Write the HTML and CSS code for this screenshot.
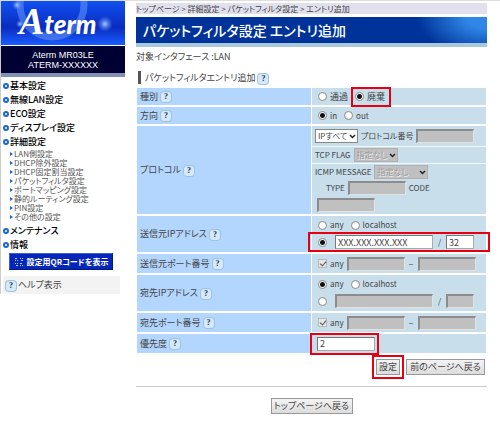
FILE: index.html
```html
<!DOCTYPE html>
<html lang="ja">
<head>
  <meta charset="UTF-8">
  <meta name="viewport" content="width=device-width, initial-scale=1.0">
  <title>パケットフィルタ設定 エントリ追加</title>
  <link rel="stylesheet" href="styles.css">
</head>
<body>

  <div class="sidebar">
    <div class="logo">
      <svg viewBox="0 0 124 44" preserveAspectRatio="none" aria-hidden="true">
        <defs>
          <linearGradient id="logoBg" x1="0" y1="0" x2="0" y2="1">
            <stop offset="0" stop-color="#1050f0"/>
            <stop offset="0.6" stop-color="#0a2cc0"/>
            <stop offset="1" stop-color="#1a5cff"/>
          </linearGradient>
          <radialGradient id="glow">
            <stop offset="0" stop-color="#a9c8ff"/>
            <stop offset="1" stop-color="#4d85f5" stop-opacity="0"/>
          </radialGradient>
        </defs>
        <rect width="124" height="44" fill="url(#logoBg)"/>
        <circle cx="51" cy="4" r="32" fill="none" stroke="#5f8ff5" stroke-opacity="0.6" stroke-width="7"/>
        <circle cx="16" cy="4" r="5" fill="url(#glow)"/>
        <circle cx="19" cy="23" r="4" fill="url(#glow)"/>
        <circle cx="104" cy="23" r="8" fill="url(#glow)"/>
      </svg>
      <span class="logo-text"><span class="logo-initial">A</span>term</span>
    </div>
    <div class="device">Aterm MR03LE<br>ATERM-XXXXXX</div>

    <ul class="menu">
      <li><a href="#">基本設定</a></li>
      <li><a href="#">無線LAN設定</a></li>
      <li><a href="#">ECO設定</a></li>
      <li><a href="#">ディスプレイ設定</a></li>
      <li class="open"><a href="#">詳細設定</a>
        <ul class="submenu">
          <li><a href="#">LAN側設定</a></li>
          <li><a href="#">DHCP除外設定</a></li>
          <li><a href="#">DHCP固定割当設定</a></li>
          <li><a href="#">パケットフィルタ設定</a></li>
          <li><a href="#">ポートマッピング設定</a></li>
          <li><a href="#">静的ルーティング設定</a></li>
          <li><a href="#">PIN設定</a></li>
          <li><a href="#">その他の設定</a></li>
        </ul>
      </li>
      <li><a href="#">メンテナンス</a></li>
      <li><a href="#">情報</a></li>
    </ul>

    <button type="button" class="qr-button">
      <svg width="10" height="10" viewBox="0 0 10 10" fill="none" stroke="#b9ccff" aria-hidden="true">
        <path d="M1 1.5h2M1 3.5h1M3 3.5h1M6 1.5h1M8 1.5h1M7 3.5h2M1 6.5h1M3 6.5h1M2 8.5h2M6 6.5h2M6 8.5h1M8 8.5h1"/>
      </svg>
      設定用QRコードを表示
    </button>
    <div class="help-toggle"><a href="#" class="help">?</a> ヘルプ表示</div>
  </div>

  <div class="main">
    <div class="breadcrumb">トップページ &gt; 詳細設定 &gt; パケットフィルタ設定 &gt; エントリ追加</div>
    <h1>パケットフィルタ設定 エントリ追加</h1>
    <p class="target">対象インタフェース :LAN</p>

    <form id="entryForm">
      <h2>パケットフィルタエントリ追加 <a href="#" class="help">?</a></h2>

      <table>
        <tr class="row-small">
          <th>種別 <a href="#" class="help">?</a></th>
          <td class="type">
            <div class="line">
              <label class="choice"><input type="radio" name="type" value="pass">通過</label>
              <label class="choice marked"><input type="radio" name="type" value="drop" checked>廃棄</label>
            </div>
          </td>
        </tr>
        <tr class="row-small">
          <th>方向 <a href="#" class="help">?</a></th>
          <td>
            <div class="line">
              <label class="choice"><input type="radio" name="direction" value="in" checked>in</label>
              <label class="choice"><input type="radio" name="direction" value="out">out</label>
            </div>
          </td>
        </tr>
        <tr>
          <th>プロトコル <a href="#" class="help">?</a></th>
          <td class="protocol">
            <div class="line">
              <select class="select-ip" name="protocol" aria-label="プロトコル"><option>IPすべて</option></select>
              <label for="protoNumber">プロトコル番号</label>
              <input type="text" id="protoNumber" disabled>
            </div>
            <div class="line">
              <label for="tcpFlag">TCP FLAG</label>
              <select class="select-flag" id="tcpFlag" disabled><option>指定なし</option></select>
            </div>
            <div class="icmp">
              <div class="line">
                <label for="icmpMessage">ICMP MESSAGE</label>
                <select class="select-icmp" id="icmpMessage" disabled><option>指定なし</option></select>
              </div>
              <div class="line indent">
                <label for="icmpType">TYPE</label>
                <input type="text" id="icmpType" disabled>
                <label for="icmpCode">CODE</label>
              </div>
              <div class="line">
                <input type="text" id="icmpCode" disabled>
              </div>
            </div>
          </td>
        </tr>
        <tr class="row-address">
          <th>送信元IPアドレス <a href="#" class="help">?</a></th>
          <td>
            <div class="line">
              <label class="choice"><input type="radio" name="src" value="any">any</label>
              <label class="choice"><input type="radio" name="src" value="localhost">localhost</label>
            </div>
            <div class="line address marked">
              <input type="radio" name="src" value="ip" aria-label="送信元IPアドレスを指定" checked>
              <input type="text" class="ip" value="XXX.XXX.XXX.XXX" aria-label="送信元IPアドレス">
              <span class="sep">/</span>
              <input type="text" class="mask" value="32" aria-label="送信元マスク長">
            </div>
          </td>
        </tr>
        <tr class="row-medium">
          <th>送信元ポート番号 <a href="#" class="help">?</a></th>
          <td>
            <div class="line ports">
              <label class="choice"><input type="checkbox" checked disabled>any</label>
              <input type="text" aria-label="送信元ポート開始" disabled>
              <span class="sep">−</span>
              <input type="text" aria-label="送信元ポート終了" disabled>
            </div>
          </td>
        </tr>
        <tr class="row-address">
          <th>宛先IPアドレス <a href="#" class="help">?</a></th>
          <td>
            <div class="line">
              <label class="choice"><input type="radio" name="dst" value="any" checked>any</label>
              <label class="choice"><input type="radio" name="dst" value="localhost">localhost</label>
            </div>
            <div class="line address">
              <input type="radio" name="dst" value="ip" aria-label="宛先IPアドレスを指定">
              <input type="text" class="ip" aria-label="宛先IPアドレス" disabled>
              <span class="sep">/</span>
              <input type="text" class="mask" aria-label="宛先マスク長" disabled>
            </div>
          </td>
        </tr>
        <tr class="row-medium">
          <th>宛先ポート番号 <a href="#" class="help">?</a></th>
          <td>
            <div class="line ports">
              <label class="choice"><input type="checkbox" checked disabled>any</label>
              <input type="text" aria-label="宛先ポート開始" disabled>
              <span class="sep">−</span>
              <input type="text" aria-label="宛先ポート終了" disabled>
            </div>
          </td>
        </tr>
        <tr class="row-medium">
          <th><label for="priority">優先度</label> <a href="#" class="help">?</a></th>
          <td>
            <div class="line">
              <span class="marked priority"><input type="text" id="priority" value="2"></span>
            </div>
          </td>
        </tr>
      </table>

      <div class="actions">
        <span class="marked submit"><button type="submit">設定</button></span>
        <button type="button" class="back">前のページへ戻る</button>
      </div>
    </form>

    <div class="footer">
      <button type="button" class="top">トップページへ戻る</button>
    </div>
  </div>

</body>
</html>
```
FILE: styles.css
```css
*,
*::before,
*::after {
  box-sizing: border-box;
  margin: 0;
  padding: 0;
}

body {
  font-family: "Noto Sans CJK JP", "Liberation Sans", sans-serif;
  font-feature-settings: "palt";
  font-size: 9px;
  line-height: 12px;
  color: #444;
  background: #fff;
  border-top: 1px solid #ddd;
  display: flex;
  align-items: flex-start;
}

a {
  color: inherit;
  text-decoration: none;
}

ul {
  list-style: none;
}

input,
select,
button {
  font: inherit;
  font-feature-settings: inherit;
  color: inherit;
}

/* sidebar */
.sidebar {
  flex: 0 0 125px;
  border-left: 1px solid #ccc;
}

.logo {
  position: relative;
  height: 44px;
}

.logo svg {
  display: block;
  width: 100%;
  height: 100%;
}

.logo-text {
  position: absolute;
  left: 18px;
  top: 3px;
  font: italic 900 26px/34px Lato, sans-serif;
  color: #fff;
}

.logo-initial {
  font-family: "Liberation Serif", serif;
  font-size: 38px;
}

.device {
  margin-top: 1px;
  padding: 4px 0 3px;
  background: #000033;
  border-bottom: 4px solid #8091b4;
  color: #fff;
  font: 9px/10px "Liberation Sans", sans-serif;
  text-align: center;
}

.menu {
  padding: 2px 0 0 2px;
  color: #000;
  font-size: 9px;
  font-weight: 500;
}

.menu > li {
  line-height: 14px;
}

.menu > li > a {
  display: flex;
  align-items: center;
  gap: 1px;
}

.menu > li > a::before {
  content: "";
  width: 6px;
  height: 6px;
  border: 2px solid #1768d8;
  border-radius: 50%;
}

.submenu {
  padding: 0 0 3px 7px;
  color: #555;
  font-size: 8px;
  font-weight: normal;
}

.submenu li {
  line-height: 9px;
}

.submenu a {
  display: flex;
  align-items: center;
  gap: 1px;
}

.submenu a::before {
  content: "";
  border: 2px solid transparent;
  border-left: 3px solid #1768d8;
  border-right: 0;
}

.qr-button {
  display: flex;
  align-items: center;
  justify-content: center;
  gap: 3px;
  width: 104px;
  height: 17px;
  margin: 1px 0 0 8px;
  background: #0626b8;
  border: 1px solid #3a5fd8;
  border-right-color: #001a80;
  border-bottom-color: #001a80;
  color: #fff;
  font-size: 8px;
  font-weight: bold;
  white-space: nowrap;
}

.help-toggle {
  margin: 6px 5px 0 2px;
  padding: 3px 2px;
  background: #f3f3f3;
}

.help {
  display: inline-block;
  width: 10px;
  height: 10px;
  margin-left: 1px;
  border-radius: 3px;
  background: #d5e9fa;
  box-shadow: 0 0 0 1px #9fc3e2;
  color: #234;
  font: bold 8px/10px "Liberation Serif", serif;
  text-align: center;
  vertical-align: middle;
}

/* main */
.main {
  flex: 1;
  padding: 2px 13px 0 11px;
}

.breadcrumb {
  height: 11px;
  background: #e1e1ee;
  font-size: 8px;
  line-height: 11px;
}

h1 {
  height: 30px;
  margin-top: 3px;
  padding-left: 7px;
  background: radial-gradient(ellipse 70px 40px at 100% 0, #2f86e6 30%, #003399);
  border-bottom: 4px solid #a9c8dc;
  color: #fff;
  font-size: 14px;
  font-weight: 500;
  line-height: 26px;
}

.target {
  margin-top: 4px;
}

h2 {
  margin: 8px 0 3px 2px;
  padding-left: 4px;
  border-left: 3px solid #555;
  font-size: 9px;
  font-weight: normal;
  line-height: 13px;
}

table {
  width: 100%;
  table-layout: fixed;
  border-collapse: separate;
  border-spacing: 1px 2px;
  margin-top: -1px;
}

th,
td {
  padding: 0 3px;
  vertical-align: middle;
}

th {
  background: #b3d6ff;
  font-weight: normal;
  text-align: left;
}

td {
  background: #c8deeb;
  font-size: 8px;
}

.type,
td input {
  font-size: 9px;
}

.row-small {
  height: 17px;
}

.row-medium {
  height: 19px;
}

.row-address {
  height: 36px;
}

.line {
  display: flex;
  align-items: center;
  gap: 3px;
  padding-left: 2px;
  white-space: nowrap;
}

.choice {
  display: flex;
  align-items: center;
  gap: 3px;
  margin-right: 3px;
}

.protocol {
  padding: 0;
}

.protocol .line {
  height: 16px;
  padding-left: 3px;
}

.protocol > .line {
  border-bottom: 1px solid #f2f8ff;
}

.protocol > .line:first-child {
  height: 21px;
}

.protocol > .line + .line {
  height: 17px;
}

.protocol .indent {
  padding-left: 14px;
}

.icmp .line:last-child {
  height: 18px;
  padding-left: 5px;
}

input[type="text"] {
  width: 58px;
  height: 14px;
  padding: 0 2px;
  background: #fff;
  border: 1px solid #aaa;
  border-top-color: #777;
  border-left-color: #777;
}

input[type="text"]:disabled {
  background: #c0c0c0;
  border-width: 2px 1px 1px 2px;
  border-color: #8c8c8c #e2e2e2 #e2e2e2 #8c8c8c;
}

input[type="radio"],
input[type="checkbox"] {
  appearance: none;
  flex: none;
  width: 9px;
  height: 9px;
  margin-left: 1px;
  background: #fff;
  border: 1px solid #8a8a8a;
}

input[type="radio"] {
  border-radius: 50%;
}

input[type="radio"]:checked {
  background: radial-gradient(circle, #111 2px, #fff 3px);
}

input[type="checkbox"] {
  position: relative;
  background: #e6e6e6;
  border-color: #bbb;
}

input[type="checkbox"]:checked::after {
  content: "";
  position: absolute;
  left: 2px;
  top: 0;
  width: 4px;
  height: 6px;
  border: solid #555;
  border-width: 0 1px 1px 0;
  transform: rotate(40deg);
}

select {
  appearance: none;
  height: 14px;
  padding: 0 8px 0 2px;
  border: 1px solid #888;
  background: #fff url("data:image/svg+xml,%3Csvg xmlns='http://www.w3.org/2000/svg' width='7' height='5'%3E%3Cpath d='M1 1l2.500 2.500L6 1' fill='none' stroke='%23222' stroke-width='1.500'/%3E%3C/svg%3E") no-repeat right 1px center;
}

select:disabled {
  background-color: #c0c0c0;
  border-color: #b0b0b0;
  color: #999;
  text-shadow: 1px 1px 0 #eee;
  opacity: 1;
}

.select-ip {
  width: 43px;
}

.select-flag {
  width: 44px;
}

.select-icmp {
  width: 54px;
}

.address {
  margin-top: 4px;
}

.address .ip {
  flex: 0 0 98px;
  margin-left: 5px;
}

.address .mask {
  width: 28px;
}

.sep {
  width: 7px;
  text-align: center;
}

.ports {
  gap: 3px;
}

.ports .choice {
  margin-right: 0;
}

/* red frame laid over the fields to fill in */
.marked {
  position: relative;
}

.marked::after {
  content: "";
  position: absolute;
  inset: -4px -6px -4px -3px;
  border: 2px solid #e60012;
  pointer-events: none;
}

.address.marked::after {
  inset: -3px -7px;
}

.priority,
.submit {
  display: flex;
}

.priority::after {
  inset: -4px -4px -4px -7px;
}

.submit::after {
  inset: -4px;
}

.actions {
  display: flex;
  justify-content: flex-end;
  gap: 6px;
  padding: 4px 2px 11px 0;
  border-bottom: 1px solid #ccc;
}

.actions button,
.top {
  height: 16px;
  min-width: 24px;
  background: linear-gradient(#f4f4f4, #dcdcdc);
  border: 1px solid #999;
  line-height: 14px;
  white-space: nowrap;
}

.actions .back {
  width: 79px;
}

.footer {
  padding-top: 11px;
  text-align: center;
}

.footer .top {
  width: 82px;
}
```
